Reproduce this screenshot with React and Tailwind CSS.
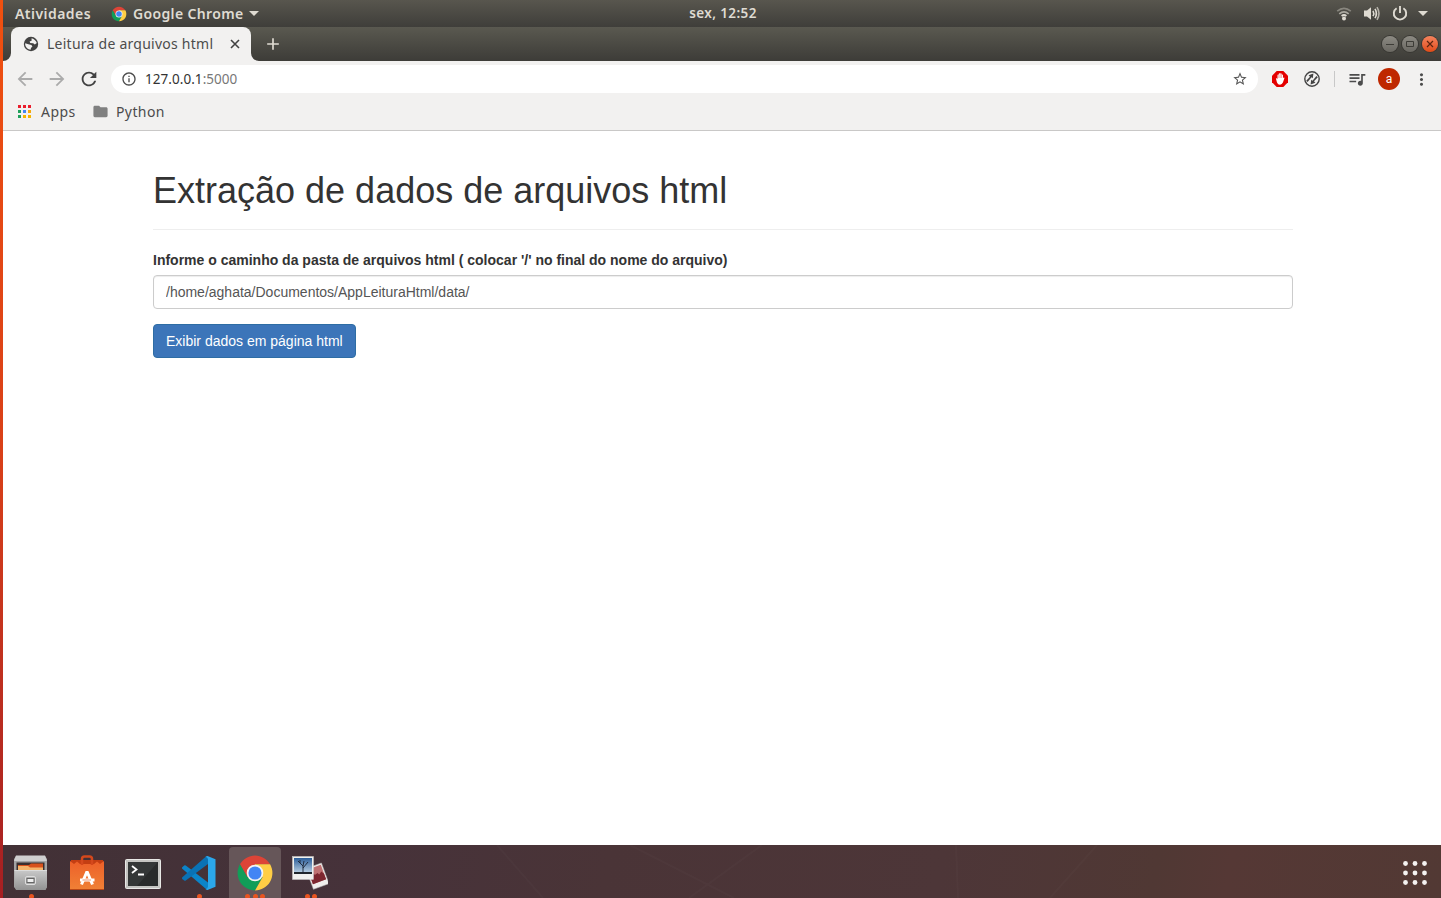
import React from "react";
import {
  MdAdd,
  MdArrowBack,
  MdArrowForward,
  MdFolder,
  MdInfoOutline,
  MdMoreVert,
  MdQueueMusic,
  MdRefresh,
  MdStarBorder,
} from "react-icons/md";

function ChromeLogo({ className }) {
  return (
    <svg viewBox="0 0 48 48" className={className}>
      <path d="M4.95 13A22 22 0 0 1 43.05 13L24 13L24 24L14.47 29.5Z" fill="#dd4437" />
      <path d="M4.95 13A22 22 0 0 0 24 46L33.53 29.5L24 24L14.47 29.5Z" fill="#119d58" />
      <path d="M43.05 13A22 22 0 0 1 24 46L33.53 29.5L24 24L24 13Z" fill="#ffce45" />
      <circle cx="24" cy="24" r="10.5" fill="#f3f3f3" />
      <circle cx="24" cy="24" r="8.3" fill="#4285f4" />
    </svg>
  );
}

function Caret({ className }) {
  return (
    <svg viewBox="0 0 10 5" className={className}>
      <path d="M0 0H10L5 5Z" fill="currentColor" />
    </svg>
  );
}

function TopBar() {
  return (
    <header className="grid h-[27px] shrink-0 grid-cols-[1fr_auto_1fr] items-center bg-linear-to-b from-[#58564e] to-[#3f3e3a] font-['Noto_Sans',sans-serif] text-[14px] leading-[27px] font-semibold text-[#dfdbd2]">
      <div className="flex items-center pl-3">
        <span className="w-24 whitespace-nowrap tracking-[0.45px]">Atividades</span>
        <ChromeLogo className="mr-1.5 size-4" />
        <span className="w-[116px] whitespace-nowrap tracking-[0.35px]">Google Chrome</span>
        <Caret className="h-[5px] w-[10px]" />
      </div>
      <span className="pl-0.5 text-[13.5px] tracking-[0.4px]">sex, 12:52</span>
      <div className="flex items-center justify-end pr-[13px]">
        <svg viewBox="0 0 16 16" className="mr-3 size-4" fill="none" stroke="currentColor" strokeWidth="1.7">
          <path d="M1.2 5.2Q8 -0.4 14.8 5.2" opacity="0.4" />
          <path d="M3.3 7.8Q8 3.8 12.7 7.8" opacity="0.65" />
          <path d="M5.6 10Q8 8 10.4 10" />
          <circle cx="8" cy="12.4" r="2" fill="currentColor" stroke="none" />
        </svg>
        <svg viewBox="0 0 16 16" className="mr-3 size-4" fill="none" stroke="currentColor" strokeWidth="1.6">
          <path d="M0 4.5H3L7 1.3V13.7L3 10.5H0Z" fill="currentColor" stroke="none" />
          <path d="M9 4.8Q10.6 7.5 9 10.2" />
          <path d="M11 2.9Q13.8 7.5 11 12.1" />
          <path d="M13 1.1Q17 7.5 13 13.9" opacity="0.7" />
        </svg>
        <svg viewBox="0 0 16 16" className="mr-2.5 size-4" fill="none" stroke="currentColor" strokeWidth="1.9">
          <path d="M4.6 2.2A6.2 6.2 0 1 0 11.4 2.2" />
          <path d="M8 0V7" />
        </svg>
        <Caret className="h-[5px] w-[10px]" />
      </div>
    </header>
  );
}

function WindowButton({ close, children }) {
  return (
    <span
      className={
        close
          ? "flex size-4 items-center justify-center rounded-full bg-linear-to-b from-[#f5835c] to-[#e04a13] text-[#5c2410] ring-1 ring-[#3a3935]"
          : "flex size-4 items-center justify-center rounded-full bg-linear-to-b from-[#8c8a83] to-[#6a6862] text-[#3d3c37] ring-1 ring-[#383733]"
      }
    >
      <svg viewBox="0 0 16 16" className="size-4" fill="none" stroke="currentColor">
        {children}
      </svg>
    </span>
  );
}

function TabStrip() {
  return (
    <div className="flex h-[34px] shrink-0 items-stretch bg-linear-to-b from-[#5a5950] to-[#3d3c38]">
      <svg viewBox="0 0 8 8" className="size-2 self-end" fill="#f2f1f0">
        <path d="M8 0A8 8 0 0 1 0 8H8Z" />
      </svg>
      <div className="flex w-60 items-center rounded-t-lg bg-[#f2f1f0] pl-3 text-[#4c4c4c]">
        <svg viewBox="0 0 16 16" className="size-4">
          <circle cx="8" cy="8" r="7.2" fill="#424242" />
          <path d="M8.6 2.2Q12.8 3.6 13.8 7L11.8 8.6L10.2 7.2L7.2 7L6.6 5.6L8.6 4.8Z" fill="#f2f1f0" />
          <path d="M2.2 7.2L5.4 8.2L8.4 9L9.4 10.6L8 12L7.6 13.8Q3.2 13.2 2.2 9Z" fill="#f2f1f0" />
        </svg>
        <span className="ml-2 w-[181px] whitespace-nowrap pb-0.5 font-['Noto_Sans',sans-serif] text-[14px] tracking-[0.25px]">
          Leitura de arquivos html
        </span>
        <svg viewBox="0 0 14 14" className="size-[14px]" fill="none" stroke="#424242" strokeWidth="1.6">
          <path d="M3 3L11 11M11 3L3 11" />
        </svg>
      </div>
      <svg viewBox="0 0 8 8" className="size-2 self-end" fill="#f2f1f0">
        <path d="M0 0A8 8 0 0 0 8 8H0Z" />
      </svg>
      <div className="flex items-center pl-1">
        <MdAdd className="size-5 text-[#dfdbd2]" />
      </div>
      <div className="ml-auto flex items-center gap-1 pr-[3px]">
        <WindowButton>
          <path d="M4 8.5H12" />
        </WindowButton>
        <WindowButton>
          <path d="M4.5 5.5H11.5V10.5H4.5Z" />
        </WindowButton>
        <WindowButton close>
          <path d="M5 5L11 11M11 5L5 11" strokeWidth="1.2" />
        </WindowButton>
      </div>
    </div>
  );
}

function Toolbar() {
  return (
    <div className="flex h-9 shrink-0 items-center bg-[#f2f1f0] pl-[11px] text-[#4c4c4c]">
      <MdArrowBack className="size-[22px] text-[#ababab]" />
      <MdArrowForward className="ml-2.5 size-[22px] text-[#ababab]" />
      <MdRefresh className="ml-2.5 size-[22px] text-[#424242]" />
      <div className="ml-[11px] flex h-7 w-[1147px] items-center rounded-full bg-white pr-2.5 pl-2.5">
        <MdInfoOutline className="size-4" />
        <span className="ml-2 font-['Noto_Sans',sans-serif] text-[13.5px] tracking-[0.05px] text-[#333]">
          127.0.0.1<span className="text-[#777]">:5000</span>
        </span>
        <MdStarBorder className="ml-auto size-4 text-[#555]" />
      </div>
      <svg viewBox="0 0 16 16" className="ml-3.5 size-4">
        <path d="M4.7 0H11.3L16 4.7V11.3L11.3 16H4.7L0 11.3V4.7Z" fill="#e40000" />
        <path
          d="M3.9 7.6Q4.8 6.9 5.5 8V4.2Q5.5 3.4 6.2 3.4Q6.8 3.4 6.8 4.2V3Q6.8 2.2 7.5 2.2Q8.2 2.2 8.2 3V2.8Q8.2 2.2 8.9 2.2Q9.6 2.2 9.6 3V4.2Q9.6 3.4 10.3 3.4Q11 3.4 11 4.2V7L11.8 6.5Q12.6 6.4 12.4 7.2L10.9 11.6Q10 13.7 8 13.7Q5.8 13.7 5 11.4Z"
          fill="white"
        />
        <path d="M6.8 4V7M8.2 3V7M9.6 4V7" stroke="#e40000" strokeWidth="0.35" />
      </svg>
      <svg viewBox="0 0 16 16" className="ml-4 size-4">
        <circle cx="8" cy="8" r="7.2" fill="none" stroke="#444" strokeWidth="1.4" />
        <path d="M2.2 9.8L6 5.7L4.6 4.2L9.4 2.6L8.8 7.2L7.5 6.2L3.6 11Z" fill="#444" />
        <path d="M13.8 6.2L10 10.3L11.4 11.8L6.6 13.4L7.2 8.8L8.5 9.8L12.4 5Z" fill="#444" />
      </svg>
      <span className="ml-3.5 h-4 w-px bg-[#c8c8c8]" />
      <MdQueueMusic className="ml-3 size-5 text-[#4c4c4c]" />
      <span className="ml-[11px] flex size-[22px] items-center justify-center rounded-full bg-[#bf2800] pb-px font-['Roboto',sans-serif] text-[12px] text-white">
        a
      </span>
      <MdMoreVert className="ml-3 size-[19px] text-[#4c4c4c]" />
    </div>
  );
}

const APP_DOTS = [
  "#ea1d2c", "#ea1d2c", "#ea1d2c",
  "#1fa05a", "#4285f4", "#f4a80c",
  "#1fa05a", "#f4b400", "#f4b400",
];

function Bookmarks() {
  return (
    <div className="flex h-[34px] shrink-0 items-center border-b border-[#c9c8c7] bg-[#f2f1f0] pb-1 pl-[15px] font-['Noto_Sans',sans-serif] text-[14px] text-[#4c4c4c]">
      <svg viewBox="0 0 13 13" className="size-[13px]">
        {APP_DOTS.map((color, i) => (
          <rect key={i} x={(i % 3) * 5} y={Math.floor(i / 3) * 5} width="3" height="3" fill={color} />
        ))}
      </svg>
      <span className="ml-2.5 w-[50.5px] tracking-[0.45px]">Apps</span>
      <MdFolder className="size-[17px] text-[#808080]" />
      <span className="ml-[7.5px] tracking-[0.4px]">Python</span>
    </div>
  );
}

function Page() {
  return (
    <main className="grow bg-white font-['Liberation_Sans',sans-serif] text-[14px] leading-5 text-[#333]">
      <div className="ml-[150px] w-[1140px] pt-10">
        <h1 className="h-[59px] border-b border-[#eee] text-[36px] leading-[39px]">
          Extração de dados de arquivos html
        </h1>
        <form className="pt-5">
          <label htmlFor="folder" className="mb-[5px] block font-bold">
            Informe o caminho da pasta de arquivos html ( colocar '/' no final do nome do arquivo)
          </label>
          <input
            id="folder"
            type="text"
            defaultValue="/home/aghata/Documentos/AppLeituraHtml/data/"
            className="block h-[34px] w-full rounded border border-[#ccc] bg-white px-3 text-[#555] shadow-[inset_0_1px_1px_rgba(0,0,0,0.075)] outline-none"
          />
          <button
            type="button"
            className="mt-[15px] block h-[34px] rounded border border-[#2e6da4] bg-[#3c75b9] px-3 text-white"
          >
            Exibir dados em página html
          </button>
        </form>
      </div>
    </main>
  );
}

function FilesIcon() {
  return (
    <svg viewBox="0 0 36 36" className="size-9">
      <defs>
        <linearGradient id="cabinet" x1="0" y1="0" x2="0" y2="1">
          <stop offset="0" stopColor="#c9c9c9" />
          <stop offset="1" stopColor="#929292" />
        </linearGradient>
      </defs>
      <path d="M3 1H32L34 4V32L32 35H4L1 32V4Z" fill="#a3a3a3" />
      <path d="M3 0.5H32L34 6H1Z" fill="#cfcfcf" />
      <rect x="3.5" y="7.5" width="28" height="8" fill="#3a3030" />
      <path d="M5 10H16L18 8.5H30V15H5Z" fill="#d8521c" />
      <path d="M5 11H15L17 12.5H30V15H5Z" fill="#f5b56c" />
      <path d="M1.5 15H34V32L32.5 35H3L1.5 32Z" fill="url(#cabinet)" />
      <path d="M1.5 15.5H34" stroke="#dcdcdc" />
      <rect x="12.5" y="21.5" width="10" height="8" rx="1.5" fill="#aaa" stroke="#dedede" />
      <rect x="14" y="23.5" width="7" height="4" fill="#eee" stroke="#666" />
    </svg>
  );
}

function SoftwareIcon() {
  return (
    <svg viewBox="0 0 36 36" className="size-9">
      <defs>
        <linearGradient id="bag" x1="0" y1="0" x2="0" y2="1">
          <stop offset="0" stopColor="#ed6029" />
          <stop offset="1" stopColor="#f08136" />
        </linearGradient>
      </defs>
      <path d="M2 5H34L35 10H1Z" fill="#c43e12" />
      <path d="M1 6L5 9L8 6.5L11 9H25L28 6.5L31 9L35 6V35H1Z" fill="url(#bag)" />
      <path d="M13 10V4Q13 1.5 15.5 1.5H20.5Q23 1.5 23 4V10" fill="none" stroke="#d5481c" strokeWidth="2.5" />
      <path d="M12.5 29.5L18 16.5L23.5 29.5" fill="none" stroke="#fff" strokeWidth="3" strokeLinejoin="bevel" />
      <path d="M11 25H25.5" stroke="#fff" strokeWidth="3" />
      <path d="M13.5 25H22" stroke="#ef9570" strokeWidth="1" />
      <path d="M1 34.5H35" stroke="#b94716" />
    </svg>
  );
}

function TerminalIcon() {
  return (
    <svg viewBox="0 0 36 32" className="relative top-px h-8 w-9">
      <rect x="0.5" y="1.5" width="35" height="29" rx="1" fill="#c4c4c1" stroke="#e8e8e6" />
      <rect x="3" y="4" width="30" height="24" fill="#292b2b" />
      <path d="M3 4H33L12 28H3Z" fill="#343737" />
      <path d="M7 8L11.5 11.5L7 15M13 16.5H19" fill="none" stroke="#fff" strokeWidth="1.8" />
    </svg>
  );
}

function CodeIcon() {
  return (
    <svg viewBox="0 0 36 36" className="size-9">
      <path d="M1.2 12.2L3.2 10.5Q4 10 4.8 10.6L27 27.5V35L25 34L1.3 13.8Q0.6 13 1.2 12.2Z" fill="#0b84c9" />
      <path d="M1.3 22.3L25 1.5L27 1V9L4.8 25.5Q4 26 3.2 25.5L1.2 23.9Q0.6 23 1.3 22.3Z" fill="#0a72b5" />
      <path d="M26.5 1L34.5 4.3V31.7L26.5 35L24.5 34.2Q27 33.5 27 31.5V4.5Q27 2.5 24.5 1.8Z" fill="#2ba7eb" />
    </svg>
  );
}

function PhotosIcon() {
  return (
    <svg viewBox="0 0 36 36" className="relative right-px size-9">
      <defs>
        <linearGradient id="sky" x1="0" y1="0" x2="0" y2="1">
          <stop offset="0" stopColor="#2c5d99" />
          <stop offset="1" stopColor="#c3d8e8" />
        </linearGradient>
      </defs>
      <g transform="rotate(-20 26 22)">
        <rect x="17.5" y="10" width="16.5" height="22" fill="#f0eeec" stroke="#bbb" strokeWidth="0.5" />
        <rect x="18.8" y="11.5" width="14" height="15.5" fill="#bf7172" />
        <path d="M18.8 27V20L20 18L21 20L22 17L24 19L27 18L28 20L31 18L32.8 21V27Z" fill="#7d2730" />
      </g>
      <rect x="0.5" y="1.5" width="21" height="23" fill="#f0f0ee" stroke="#ccc" strokeWidth="0.5" />
      <rect x="2" y="3" width="18" height="16" fill="url(#sky)" />
      <path d="M2 17H20V19H2Z" fill="#20262c" />
      <path d="M11 18V11L6 6M11 13L16 7M11 11L12 6M8 8L8 5" fill="none" stroke="#182334" strokeWidth="0.9" />
    </svg>
  );
}

function DockItem({ active, dots, children }) {
  return (
    <div
      className={
        active
          ? "relative mt-0.5 flex h-[51px] w-[52px] items-center justify-center rounded-t bg-[#665659]"
          : "relative mt-0.5 flex h-[51px] w-[52px] items-center justify-center"
      }
    >
      {children}
      <div className="absolute inset-x-0 -bottom-px flex h-[5px] justify-center gap-[2.5px] overflow-hidden">
        {Array.from({ length: dots }, (_, i) => (
          <span key={i} className="size-[5px] shrink-0 rounded-full bg-[#e95420]" />
        ))}
      </div>
    </div>
  );
}

function Dock() {
  return (
    <footer className="relative flex h-[53px] shrink-0 gap-1 overflow-hidden bg-linear-[100deg,#423136_0%,#46323a_25%,#4a3437_42%,#4d3638_65%,#503834_80%,#553835_85%,#523934_100%] pl-0.5">
      <svg viewBox="0 0 1438 53" className="absolute inset-0 h-[53px] w-[1438px]" fill="none" stroke="#fff" strokeOpacity="0.02" strokeWidth="2">
        <path d="M494 0L540 53M627 0L731 53M759 0L686 53M953 0L955 53M1094 0L1047 53" />
      </svg>
      <DockItem dots={1}><FilesIcon /></DockItem>
      <DockItem dots={0}><SoftwareIcon /></DockItem>
      <DockItem dots={0}><TerminalIcon /></DockItem>
      <DockItem dots={1}><CodeIcon /></DockItem>
      <DockItem dots={3} active><ChromeLogo className="size-[38px]" /></DockItem>
      <DockItem dots={2}><PhotosIcon /></DockItem>
      <svg viewBox="0 0 24 24" className="mt-4 mr-3.5 ml-auto size-6" fill="#f4f2f1">
        {[2.5, 12, 21.5].map((y) =>
          [2.5, 12, 21.5].map((x) => <circle key={`${x}-${y}`} cx={x} cy={y} r="2.4" />)
        )}
      </svg>
    </footer>
  );
}

export default function App() {
  return (
    <div className="flex h-[898px] w-[1441px] overflow-hidden">
      <div className="w-[3px] shrink-0 bg-linear-to-b from-[#f0500f] via-[#d94018] to-[#a51f22]" />
      <div className="flex min-w-0 grow flex-col">
        <TopBar />
        <TabStrip />
        <Toolbar />
        <Bookmarks />
        <Page />
        <Dock />
      </div>
    </div>
  );
}
